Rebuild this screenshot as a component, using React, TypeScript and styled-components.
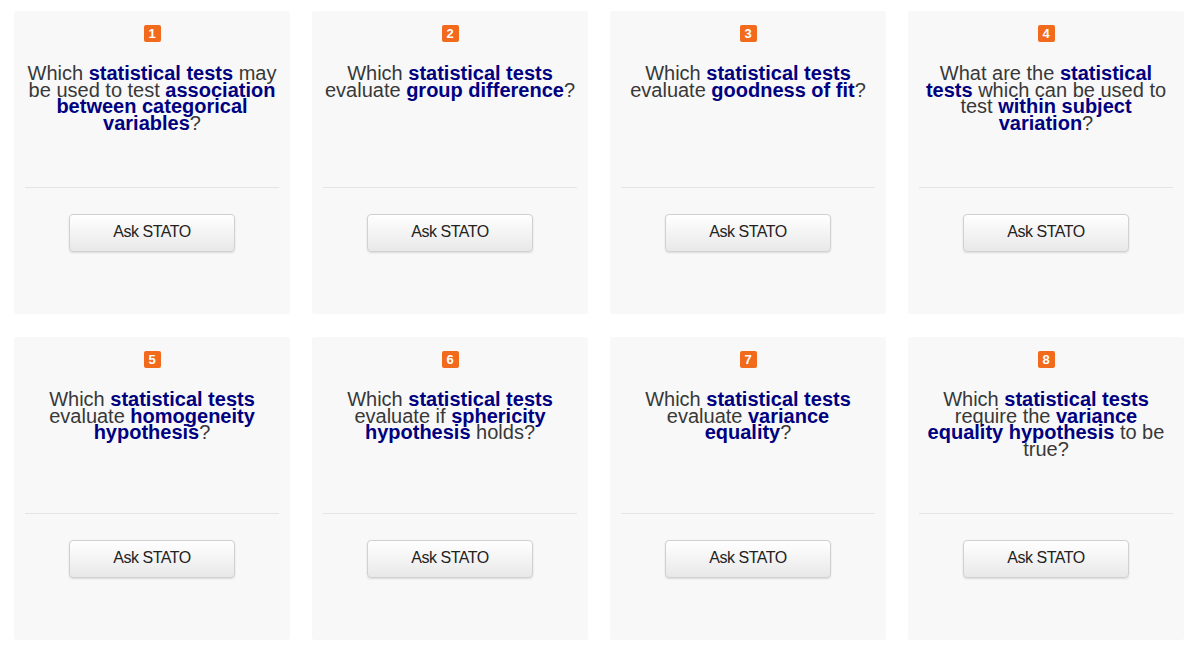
import styled, { createGlobalStyle } from 'styled-components';

const GlobalStyle = createGlobalStyle`
  body {
    margin: 0;
    background: #ffffff;
    font-family: "Liberation Sans", Arial, Helvetica, sans-serif;
  }
`;

const Grid = styled.div`
  display: grid;
  grid-template-columns: repeat(4, 276px);
  column-gap: 22px;
  row-gap: 23px;
  padding: 11px 16px 0 14px;
`;

const Card = styled.div`
  display: flex;
  flex-direction: column;
  align-items: center;
  height: 303px;
  box-sizing: border-box;
  padding: 14px 11px 0;
  background: #f8f8f8;
  border-radius: 3px;
`;

const Badge = styled.span`
  display: flex;
  align-items: center;
  justify-content: center;
  width: 17px;
  height: 17px;
  border-radius: 2px;
  background: #f26a1b;
  color: #ffffff;
  font-size: 13px;
  font-weight: 700;
  line-height: 1;
`;

const Question = styled.p`
  margin: 23px 0 0;
  width: 254px;
  height: 122px;
  text-align: center;
  font-size: 20px;
  line-height: 16.7px;
  color: #383838;
`;

const Term = styled.b`
  color: #000080;
  font-weight: 700;
`;

const Divider = styled.hr`
  width: 254px;
  margin: 0;
  border: none;
  border-top: 1px solid #e4e4e4;
`;

const AskButton = styled.button`
  margin-top: 26px;
  width: 166px;
  height: 38px;
  padding: 0 0 2px;
  border: 1px solid #d0d0d0;
  border-radius: 4px;
  background: linear-gradient(#ffffff, #e8e8e8);
  box-shadow: 0 1px 2px rgba(0, 0, 0, 0.12);
  color: #222222;
  font-family: "Liberation Sans", Arial, sans-serif;
  font-size: 16px;
  letter-spacing: -0.5px;
  cursor: pointer;
`;

type Part = string | { t: string };

const questions: Part[][] = [
  ['Which ', { t: 'statistical tests' }, ' may be used to test ', { t: 'association between categorical variables' }, '?'],
  ['Which ', { t: 'statistical tests' }, ' evaluate ', { t: 'group difference' }, '?'],
  ['Which ', { t: 'statistical tests' }, ' evaluate ', { t: 'goodness of fit' }, '?'],
  ['What are the ', { t: 'statistical tests' }, ' which can be used to test ', { t: 'within subject variation' }, '?'],
  ['Which ', { t: 'statistical tests' }, ' evaluate ', { t: 'homogeneity hypothesis' }, '?'],
  ['Which ', { t: 'statistical tests' }, ' evaluate if ', { t: 'sphericity hypothesis' }, ' holds?'],
  ['Which ', { t: 'statistical tests' }, ' evaluate ', { t: 'variance equality' }, '?'],
  ['Which ', { t: 'statistical tests' }, ' require the ', { t: 'variance equality hypothesis' }, ' to be true?'],
];

const App = () => (
  <>
    <GlobalStyle />
    <Grid>
      {questions.map((parts, i) => (
        <Card key={i}>
          <Badge>{i + 1}</Badge>
          <Question>
            {parts.map((p, j) => (typeof p === 'string' ? p : <Term key={j}>{p.t}</Term>))}
          </Question>
          <Divider />
          <AskButton type="button">Ask STATO</AskButton>
        </Card>
      ))}
    </Grid>
  </>
);

export default App;
